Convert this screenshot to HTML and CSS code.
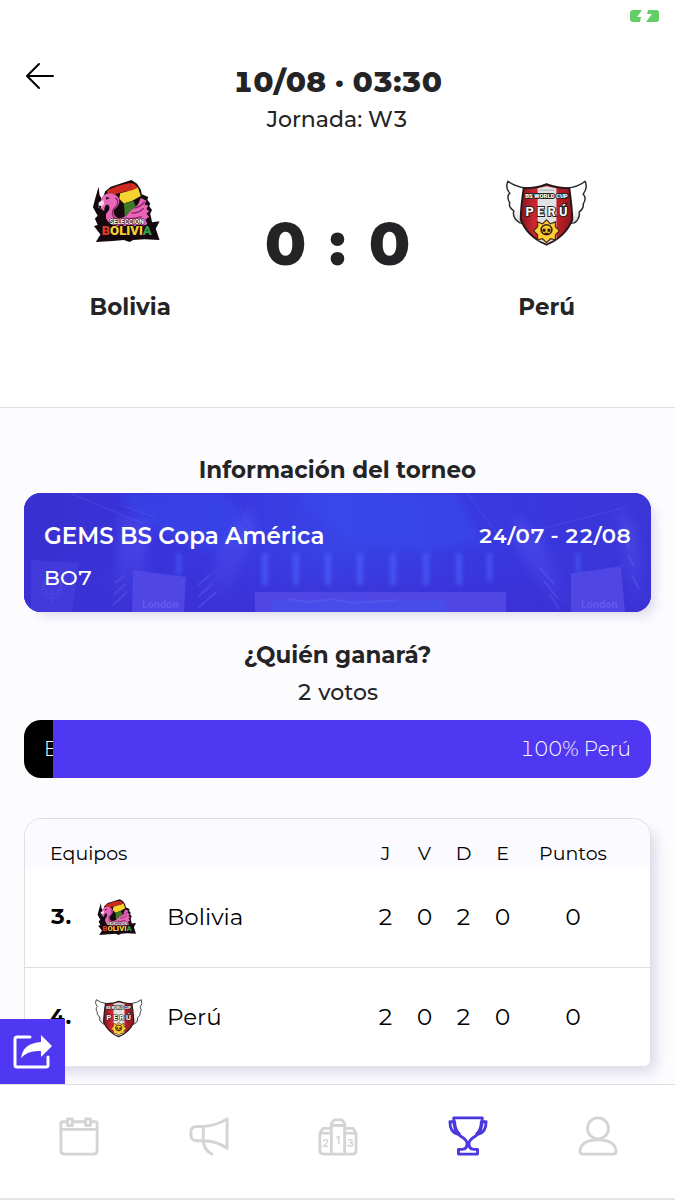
FILE: index.html
```html
<!DOCTYPE html>
<html lang="es">
<head>
<meta charset="utf-8">
<meta name="viewport" content="width=device-width, initial-scale=1">
<title>Bolivia : Perú</title>
<link rel="stylesheet" href="styles.css">
</head>
<body>
<svg class="defs" aria-hidden="true">
  <defs>
    <linearGradient id="shield" x1="0" x2="1"><stop offset="0" stop-color="#85151b"/><stop offset=".25" stop-color="#c92631"/><stop offset=".7" stop-color="#bf2029"/><stop offset="1" stop-color="#8e161d"/></linearGradient>
    <linearGradient id="wing" x1="0" y1="0" x2="0" y2="1"><stop offset="0" stop-color="#fff"/><stop offset=".6" stop-color="#fff"/><stop offset="1" stop-color="#d3d6da"/></linearGradient>
    <symbol id="bolivia" viewBox="2 -2 107 96">
      <path fill="#15090f" d="M22 20l1 9 3 5 3-9 6-5 22-7 6 4 4 6 1 5 7 3-1 3 3 4-1 3 3 4-2 4 1 4 1 5 8-1-4 8 4 12-16-1-12 1-4 2-6-2-12 1-18 1 5-8-7-9 4-1-3-7 3-3-5-9 2-8z"/>
      <path fill="#cf2a20" d="M31 24q12-6 24-8l2 8q-14 2-25 7z"/>
      <path fill="#f6d32e" d="M45 27l11-3 8-3 3 9-9 5-9 3-5-5z"/>
      <path fill="#d42a20" d="M55 16l5 1 4 4-7 3z"/>
      <path fill="#3e7a24" d="M49 38l10-3 3 7-12 10z"/>
      <path fill="#e865b8" d="M24 36q1-8 9-9 9 0 11 7 1 6-6 11-1 7 6 9 7-1 11-7 6-5 9-8l3-7 6 3-2 4 4 1-2 4 3 2-3 3 3 3-4 3 2 5-5 2H40q-12-4-10-13 6-6 2-10-4 0-4 7l-3-2z"/>
      <path fill="none" stroke="#8e286b" stroke-width="1.500" d="M51 54q7 1 17-2M57 48q7 1 13-5M40 32q6 5-2 12-4 8 5 12M60 43q8-2 11-7"/>
      <path fill="#f7dce9" d="M22 37l5-3 1 4-4 6-2-2z"/>
      <path fill="#15090f" d="M22 41l3-1-1 5zM30 31l4 1-4 2z"/>
      <text class="crest-small" x="52" y="60" text-anchor="middle">SELECCION</text>
      <text class="crest-name" x="52" y="72" text-anchor="middle"><tspan fill="#e43828">B</tspan><tspan fill="#f5d130">OLIVI</tspan><tspan fill="#31a24b">A</tspan></text>
    </symbol>
    <symbol id="peru" viewBox="0 0 105 90">
      <path fill="url(#wing)" stroke="#292c30" stroke-width="1.500" stroke-linejoin="round" d="M33 22Q21 21 13 15q-3 7 2 12-4 3 0 10-2 3 4 8-2 7 6 12l7 1zM72 22q12-1 19-7 3 7-2 13 4 4 0 10 1 4-4 8 1 7-5 11l-8 1z"/>
      <path fill="url(#shield)" stroke="#281719" stroke-width="2" d="M29 22q14 0 23-4 11 4 23 4 3 22 3 32-7 17-26 25-19-8-26-25 0-12 3-32z"/>
      <path fill="#e1e2e3" d="M43 22l9-2 10 2v51l-10 5-9-4z"/>
      <path fill="none" stroke="#aaa" d="M45 24l15 0M45 72l7 4 8-4"/>
      <text class="peru-top" x="52" y="32" text-anchor="middle">BS WORLD CUP</text>
      <text class="peru-name" x="52" y="50" text-anchor="middle">P E R Ú</text>
      <path fill="#ffcd36" stroke="#422d13" stroke-width="1.200" d="M52 54l4 4 5-2 0 5 4 4-4 4 0 5-5-1-4 4-4-4-5 1 0-5-4-4 4-4 0-5 5 2z"/>
      <ellipse cx="52" cy="64" rx="5.500" ry="5" fill="#ffca30" stroke="#37200e" stroke-width="1.500"/>
      <path fill="#24170e" d="M48 63h3v3h-3zM53 63h3v3h-3zM50 67h4v2h-4z"/>
    </symbol>
  </defs>
</svg>

<header class="match">
  <div class="status">
    <svg width="30" height="14" viewBox="0 0 30 14" role="img" aria-label="Batería cargando"><path fill="#65cd68" d="M3 1h9L7 8h4l-1 5H3q-3 0-3-3V4q0-3 3-3zM18 1h8q3 0 3 3v6q0 3-3 3H16l6-8h-5z"/></svg>
  </div>
  <div class="topbar">
    <button class="back" type="button" aria-label="Volver"><svg width="30" height="28" viewBox="0 0 30 28" fill="none" stroke="#000" stroke-width="2" stroke-linecap="round" stroke-linejoin="round"><path d="M14 2L2 14l12 12M2 14h26"/></svg></button>
    <div class="when"><h1>10/08 · 03:30</h1><p>Jornada: W3</p></div>
  </div>
  <div class="versus">
    <div class="team"><svg class="crest" role="img" aria-label="Escudo Bolivia"><use href="#bolivia"/></svg><h2>Bolivia</h2></div>
    <div class="score"><span>0</span><span>:</span><span>0</span></div>
    <div class="team"><svg class="crest" role="img" aria-label="Escudo Perú"><use href="#peru"/></svg><h2>Perú</h2></div>
  </div>
</header>

<main>
  <h2>Información del torneo</h2>
  <a class="tournament" href="#torneo">
    <svg class="stage" viewBox="0 0 627 119" preserveAspectRatio="none" aria-hidden="true">
      <defs>
        <linearGradient id="base" x1="0" x2="1"><stop offset="0" stop-color="#3830cf"/><stop offset=".3" stop-color="#3936df"/><stop offset=".5" stop-color="#3944e6"/><stop offset=".75" stop-color="#3838df"/><stop offset="1" stop-color="#3b36d7"/></linearGradient>
        <linearGradient id="floor" x1="0" y1="0" x2="0" y2="1"><stop offset=".45" stop-color="#3933d8" stop-opacity="0"/><stop offset="1" stop-color="#3b31d5"/></linearGradient>
        <filter id="soft" x="-20%" y="-20%" width="140%" height="140%"><feGaussianBlur stdDeviation="4"/></filter>
        <filter id="lamp" x="-20%" y="-20%" width="140%" height="140%"><feGaussianBlur stdDeviation="2"/></filter>
      </defs>
      <path fill="url(#base)" d="M0 0h627v119H0z"/>
      <g filter="url(#soft)">
        <path fill="#3a4cf0" opacity=".5" d="M95 0h105l35 45-50 14-70-30zM270 0h160l30 50-60 8-80-12z"/>
        <path fill="#5050ed" opacity=".5" d="M96 22l30 9-5 50-22 38h-10zM196 54l30-40 6 18-24 66-28 21h-8zM490 20l24 20 40 79h-22l-40-64zM594 16l17 15 12 88h-16z"/>
      </g>
      <path fill="url(#floor)" d="M0 0h627v119H0z"/>
      <g filter="url(#lamp)" fill="#536bff" opacity=".55">
        <path d="M153 60h4v22h-4zM238 60h6v32h-6zM269 60h6v32h-6zM301 60h6v32h-6zM333 60h6v32h-6zM366 60h6v32h-6zM399 60h6v32h-6zM432 60h6v32h-6zM463 60h5v28h-5zM552 60h4v20h-4z"/>
      </g>
      <g fill="#584eea">
        <path opacity=".3" d="M7 67l48 3-7 49H7z"/>
        <path opacity=".7" d="M109 77l53 7-2 35h-52z"/>
        <path opacity=".7" d="M547 81l50-7 4 45h-54z"/>
        <path opacity=".7" d="M231 99h251v20H231z"/>
      </g>
      <path fill="#4650eb" opacity=".7" d="M247 107h175v12H247z"/>
      <g fill="none" stroke="#7269ef" opacity=".3">
        <path d="M48 1l70 29M98 12l34 13M216 14l20 38M443 0l35 47M518 36l84-22M547 81l53-8"/>
        <path stroke-width="2" d="M91 90l10-8M90 101l12-10M89 112l14-13M174 92l12-10M174 104l14-13M174 115l18-16M516 75l14 16M520 88l14 18M526 102l9 14M599 42l6 12M604 62l6 12M608 82l7 14M264 106l22 3 22-3 20 4 45-3"/>
        <circle cx="28" cy="95" r="10"/><path d="M19 92l9-7 9 7-4 9h-9zM28 97v14"/>
      </g>
      <g class="stage-sign"><text x="118" y="115">London</text><text x="557" y="115">London</text></g>
    </svg>
    <span class="line strong"><span>GEMS BS Copa América</span><time>24/07 - 22/08</time></span>
    <span class="line">BO7</span>
  </a>

  <h2>¿Quién ganará?</h2>
  <p class="votes">2 votos</p>
  <div class="poll">
    <button class="home" type="button">Bolivia</button>
    <button class="away" type="button">100% Perú</button>
  </div>

  <div class="standings">
    <table>
      <colgroup><col class="rank"><col class="logo"><col><col class="stat"><col class="stat"><col class="stat"><col class="stat"><col class="points"></colgroup>
      <thead><tr><th colspan="3" scope="colgroup">Equipos</th><th scope="col">J</th><th scope="col">V</th><th scope="col">D</th><th scope="col">E</th><th scope="col">Puntos</th></tr></thead>
      <tbody>
        <tr><td>3.</td><td><svg class="mini" role="img" aria-label="Escudo Bolivia"><use href="#bolivia"/></svg></td><td>Bolivia</td><td>2</td><td>0</td><td>2</td><td>0</td><td>0</td></tr>
        <tr><td>4.</td><td><svg class="mini" role="img" aria-label="Escudo Perú"><use href="#peru"/></svg></td><td>Perú</td><td>2</td><td>0</td><td>2</td><td>0</td><td>0</td></tr>
      </tbody>
    </table>
  </div>
</main>

<nav class="tabs" aria-label="Principal">
  <button class="share" type="button" aria-label="Compartir"><svg width="40" height="36" viewBox="0 0 40 36"><path fill="none" stroke="#fff" stroke-width="3" stroke-linecap="round" stroke-linejoin="round" d="M17 3H4q-2 0-2 2v26q0 2 2 2h29q2 0 2-2v-8"/><path fill="#fff" d="M28 1l11 11-11 11v-6Q15 16 8 24 10 9 28 8z"/></svg></button>
  <a href="#calendario" aria-label="Calendario"><svg viewBox="0 0 42 42"><path d="M8 6H4Q2 6 2 8v28q0 4 4 4h30q4 0 4-4V8q0-2-2-2h-5M14 6h13M2 14h38M9 3h5v7H9zM28 3h5v7h-5z"/></svg></a>
  <a href="#noticias" aria-label="Noticias"><svg viewBox="0 0 42 42"><path d="M15 11H8q-6 0-6 6v3q0 6 6 6h7zM15 11q14-1 25-8v31q-11-8-25-8M15 26q1 10 9 14"/></svg></a>
  <a href="#clasificacion" aria-label="Clasificación"><svg viewBox="0 0 42 42"><path d="M14 40V8l3-4h8l3 4v32M14 13H5l-3 5v18q0 4 4 4h30q4 0 4-4V18l-3-5h-9M14 10h14M2 18h12M28 18h12"/><g class="podium" text-anchor="middle"><text x="8" y="33">2</text><text x="21" y="29">1</text><text x="34" y="33">3</text></g></svg></a>
  <a class="active" href="#torneos" aria-label="Torneos" aria-current="page"><svg viewBox="0 0 42 42"><path d="M6 2h30q0 15-7 19-7 4-7 8 0 6 5 6h4v5H11v-5h4q5 0 5-6 0-4-7-8-7-4-7-19zM6 6H2q0 11 8 13M36 6h4q0 11-8 13M7 6q0 8 5 13M35 6q0 8-5 13"/></svg></a>
  <a href="#perfil" aria-label="Perfil"><svg viewBox="0 0 42 42"><circle cx="21" cy="13" r="11"/><path d="M2 37Q3 25 21 25t19 12q0 3-3 3H5q-3 0-3-3z"/></svg></a>
</nav>
</body>
</html>
```
FILE: styles.css
```css
* { box-sizing: border-box; }

body {
  margin: 0;
  min-height: 100vh;
  display: flex;
  flex-direction: column;
  background: #fcfcff;
  color: #242426;
  font: 500 22px/28px Montserrat, Inter, sans-serif;
  font-variant-numeric: tabular-nums;
}

h1, h2, p { margin: 0; }
button { border: 0; padding: 0; font: inherit; font-variant-numeric: inherit; color: inherit; background: none; cursor: pointer; }
a { color: inherit; text-decoration: none; }
.defs { position: absolute; width: 0; height: 0; }

.match { background: #fff; border-bottom: 1px solid #dfdfe3; padding-bottom: 85px; }
.status { display: flex; justify-content: flex-end; padding: 9px 15px 0; height: 62px; }
.topbar { display: grid; grid-template-columns: 48px 1fr 48px; padding: 0 16px; align-items: start; }
.back { display: flex; justify-content: center; }
.when { text-align: center; }
h1 { font-size: 29px; line-height: 40px; font-weight: 800; }
.when p { padding-top: 4px; }
.versus { display: grid; grid-template-columns: 1fr 160px 1fr; padding: 32px 0 0 2px; }
.team { display: flex; flex-direction: column; align-items: center; text-align: center; }
.crest { width: 104px; height: 90px; }
h2 { font-size: 23px; line-height: 32px; font-weight: 700; text-align: center; }
.team h2 { padding-top: 36px; line-height: 30px; }
.score { display: flex; justify-content: space-between; align-self: start; padding: 46px 8px 0 6px; font-size: 60px; line-height: 64px; font-weight: 800; }

.crest-small { font: 700 7px Roboto, sans-serif; fill: #fff; stroke: #15090f; stroke-width: 1px; paint-order: stroke; }
.crest-name { font: 900 14px Roboto, sans-serif; stroke: #15090f; stroke-width: 2px; paint-order: stroke; }
.peru-top { font: 900 6px Roboto, sans-serif; fill: #fff; stroke: #222; stroke-width: 2px; paint-order: stroke; }
.peru-name { font: 700 13px Roboto, sans-serif; fill: #fff; stroke: #222; stroke-width: 2px; paint-order: stroke; }

main { flex: 1; padding: 46px 24px 16px; }
.tournament {
  position: relative;
  display: flex;
  flex-direction: column;
  gap: 14px;
  margin: 7px 0 27px;
  padding: 29px 20px 20px;
  border-radius: 17px;
  background: #3836dc;
  color: #fff;
  box-shadow: 8px 8px 12px -4px #dedbea;
}
.stage { position: absolute; inset: 0; width: 100%; height: 100%; border-radius: inherit; }
.stage-sign { font: 700 10px Inter, sans-serif; fill: #8b83ff; opacity: .35; }
.line { position: relative; display: flex; justify-content: space-between; gap: 20px; font-size: 21px; }
.strong { font-size: 23px; font-weight: 600; }
.strong time { font-size: 21px; font-weight: 600; }
.votes { padding: 8px 0 13px; text-align: center; }

.poll { display: flex; height: 58px; overflow: hidden; border-radius: 17px; color: #fff; font-size: 20px; font-weight: 300; }
.home { width: 29px; flex: none; overflow: hidden; padding-left: 20px; background: #000; text-align: left; white-space: nowrap; }
.away { flex: 1; padding-right: 20px; background: #5037f1; text-align: right; }

.standings {
  margin-top: 40px;
  border: 1px solid #dfdfe3;
  border-bottom: 2px solid #e3e2e9;
  border-radius: 18px 18px 8px 8px;
  overflow: hidden;
  color: #000;
  box-shadow: 8px 8px 14px -4px #d8d6e6;
}
table { width: 100%; table-layout: fixed; border-collapse: collapse; }
.rank { width: 61px; }
.logo { width: 66px; }
.stat { width: 39px; }
.points { width: 128px; }
th { height: 49px; padding: 20px 0 0; background: #fbfbff; font-size: 19px; line-height: 28px; font-weight: 400; text-align: center; }
th:first-child { padding-left: 25px; text-align: left; }
th:last-child, td:last-child { padding-right: 26px; }
td { height: 99px; padding: 0; background: #fff; font-size: 23px; font-weight: 400; text-align: center; }
td:first-child { padding-left: 25px; font-size: 22px; font-weight: 700; text-align: left; }
td:nth-child(3) { padding-left: 15px; text-align: left; }
tbody tr + tr td { border-top: 1px solid #dfdfe3; }
.mini { display: block; width: 62px; height: 52px; margin: 0 auto; }

.tabs {
  position: sticky;
  bottom: 0;
  display: grid;
  grid-template-columns: repeat(5, 1fr);
  height: 116px;
  padding: 31px 12px 0 14px;
  background: #fff;
  border-top: 1px solid #dfdfe3;
  border-bottom: 2px solid #e4e4e6;
}
.tabs a { display: flex; justify-content: center; align-items: flex-start; color: #d4d4d4; }
.tabs a svg { width: 40px; height: 40px; fill: none; stroke: currentColor; stroke-width: 3px; stroke-linecap: round; stroke-linejoin: round; }
.tabs .active { color: #4c38df; }
.tabs .podium { font: 700 11px Inter, sans-serif; fill: currentColor; stroke: none; }
.share { position: absolute; left: 0; bottom: calc(100% + 1px); display: flex; align-items: center; justify-content: center; width: 65px; height: 65px; background: #5037f1; }
```
